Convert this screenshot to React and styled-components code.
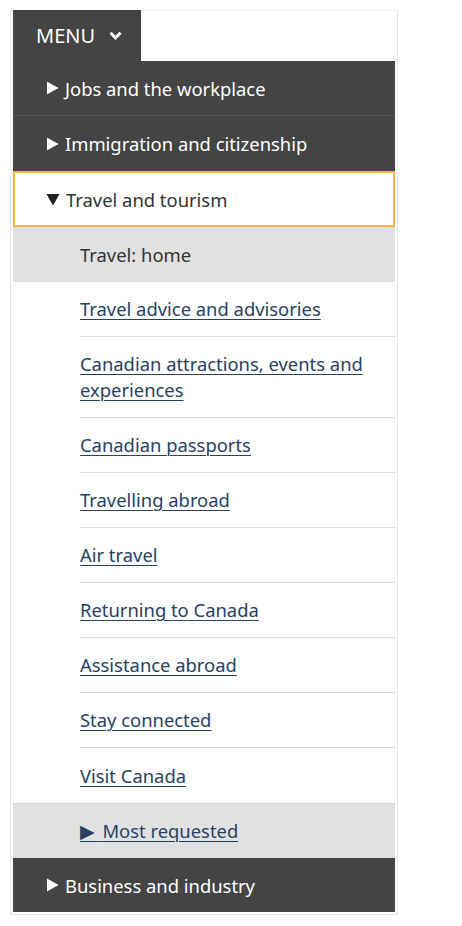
import React from 'react';
import styled, { createGlobalStyle } from 'styled-components';

const GlobalStyle = createGlobalStyle`
  body {
    margin: 0;
    background: #fff;
    font-family: 'Noto Sans', 'Open Sans', sans-serif;
  }
`;

const Frame = styled.nav`
  margin: 10px 0 0 10px;
  width: 382px;
  border: 1px solid #e6e6e6;
  border-top-color: #f0f0f0;
  padding: 0 2px 2px 2px;
`;

const MenuButton = styled.button`
  display: flex;
  align-items: center;
  gap: 14px;
  width: 128px;
  height: 51px;
  margin-top: -1px;
  padding: 0 0 0 23px;
  border: 0;
  background: #444;
  color: #fff;
  font-family: inherit;
  font-size: 20px;
  cursor: pointer;
`;

const List = styled.ul`
  list-style: none;
  margin: 0;
  padding: 0;
`;

const Section = styled.li`
  display: flex;
  align-items: center;
  gap: 6px;
  height: ${p => p.$h || 55}px;
  box-sizing: border-box;
  font-size: 18.4px;
  background: ${p => (p.$open ? '#fff' : '#444')};
  color: ${p => (p.$open ? '#333' : '#fff')};
  border: ${p => (p.$open ? '2px solid #f2b24c' : '0')};
  border-bottom: ${p => (p.$open ? '2px solid #f2b24c' : p.$sep ? '1px solid #555' : '0')};
  padding-left: ${p => (p.$open ? 31 : 33)}px;
`;

const Current = styled.li`
  display: flex;
  align-items: center;
  height: 55px;
  padding-left: 67px;
  background: #e1e1e1;
  color: #333;
  font-size: 18.4px;
`;

const Item = styled.li`
  padding-left: 67px;
`;

const ItemInner = styled.div`
  display: flex;
  align-items: center;
  min-height: ${p => (p.$last ? 55 : 54)}px;
  box-sizing: border-box;
  padding: 14px 12px 14px 0;
  border-bottom: ${p => (p.$last ? '0' : '1px solid #dcdcdc')};
  font-size: 18.4px;
  line-height: 26px;
`;

const Link = styled.a`
  color: #284162;
  text-decoration: underline;
  text-underline-offset: 3px;
  text-decoration-thickness: 1px;
`;

const More = styled.li`
  display: flex;
  align-items: center;
  height: 55px;
  padding-left: 67px;
  background: #e1e1e1;
  border-top: 1px solid #d4d4d4;
  box-sizing: border-box;
  font-size: 18.4px;
  line-height: 26px;
`;

const Glyph = styled.span`
  font-family: 'DejaVu Sans', sans-serif;
  font-size: 19px;
  letter-spacing: 3px;
`;

const Tri = ({ dir = 'right', color = '#fff' }) =>
  dir === 'right' ? (
    <svg width="13" height="14" viewBox="0 0 13 14">
      <path d="M1 0.5 L12.5 7 L1 13.5 Z" fill={color} />
    </svg>
  ) : (
    <svg width="14" height="13" viewBox="0 0 14 13">
      <path d="M0.5 1 L13.5 1 L7 12.5 Z" fill={color} />
    </svg>
  );

const Chevron = () => (
  <svg width="13" height="9" viewBox="0 0 13 9">
    <path d="M1.5 1.8 L6.5 6.8 L11.5 1.8" fill="none" stroke="#fff" strokeWidth="3" />
  </svg>
);

const links = [
  'Travel advice and advisories',
  'Canadian attractions, events and experiences',
  'Canadian passports',
  'Travelling abroad',
  'Air travel',
  'Returning to Canada',
  'Assistance abroad',
  'Stay connected',
  'Visit Canada',
];

export default function App() {
  return (
    <>
      <GlobalStyle />
      <Frame>
        <MenuButton>
          MENU <Chevron />
        </MenuButton>
        <List>
          <Section $sep>
            <Tri /> Jobs and the workplace
          </Section>
          <Section>
            <Tri /> Immigration and citizenship
          </Section>
          <Section $open $h={56}>
            <Tri dir="down" color="#222" /> Travel and tourism
          </Section>
          <Current>Travel: home</Current>
          {links.map((l, i) => (
            <Item key={l}>
              <ItemInner $last={i === links.length - 1}>
                <Link href="#">{l}</Link>
              </ItemInner>
            </Item>
          ))}
          <More>
            <Link href="#">
              <Glyph>▶</Glyph> Most requested
            </Link>
          </More>
          <Section $h={54}>
            <Tri /> Business and industry
          </Section>
        </List>
      </Frame>
    </>
  );
}
